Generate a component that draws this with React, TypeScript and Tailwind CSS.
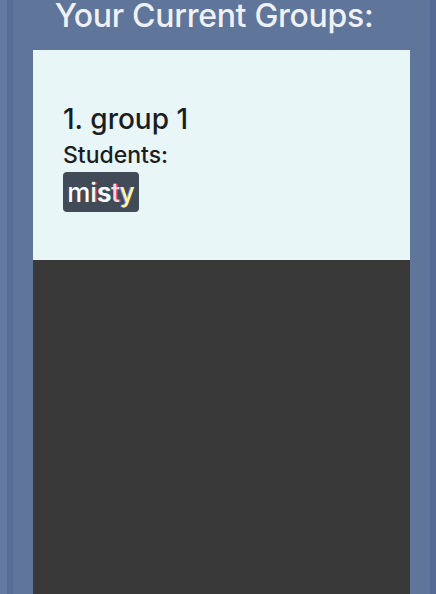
import React from "react";

export default function App() {
  return (
    <div className="w-[436px] h-[594px] overflow-hidden flex bg-[#5f7599] font-medium" style={{ fontFamily: "Inter, 'Noto Sans', sans-serif" }}>
      <div className="w-[7px] shrink-0 bg-[#6379a0]" />
      <div className="w-[6px] shrink-0 bg-[#576d97]" />
      <div className="flex-1 flex flex-col">
        <div className="h-[50px] flex items-start justify-center pr-[15px]">
          <h1 className="text-[32px] leading-[32px] tracking-[-0.3px] text-[#eef1f6] font-medium">Your Current Groups:</h1>
        </div>
        <div className="flex flex-1 px-[20px]">
          <div className="flex-1 flex flex-col">
            <div className="h-[210px] bg-[#e8f6f8] pl-[30px] pt-[52px]">
              <div className="text-[28px] leading-[34px] text-[#1b1d20]">1. group 1</div>
              <div className="mt-[6px] text-[23px] leading-[26px] text-[#1b1d20]">Students:</div>
              <div className="mt-[4px] flex items-center h-[40px] w-[76px] justify-center rounded-[4px] bg-[#414b57] text-[26px] text-white">
                <span>m</span>
                <span className="[text-shadow:1px_0_#f44]">i</span>
                <span className="[text-shadow:-1px_0_#f55,1px_0_#4ff]">s</span>
                <span className="text-[#ffd6e4] [text-shadow:1px_0_#f36]">t</span>
                <span className="text-[#fff6a0] [text-shadow:-1px_0_#88f]">y</span>
              </div>
            </div>
            <div className="flex-1 bg-[#393939]" />
          </div>
        </div>
      </div>
      <div className="w-[6px] shrink-0 bg-[#556a94]" />
    </div>
  );
}
